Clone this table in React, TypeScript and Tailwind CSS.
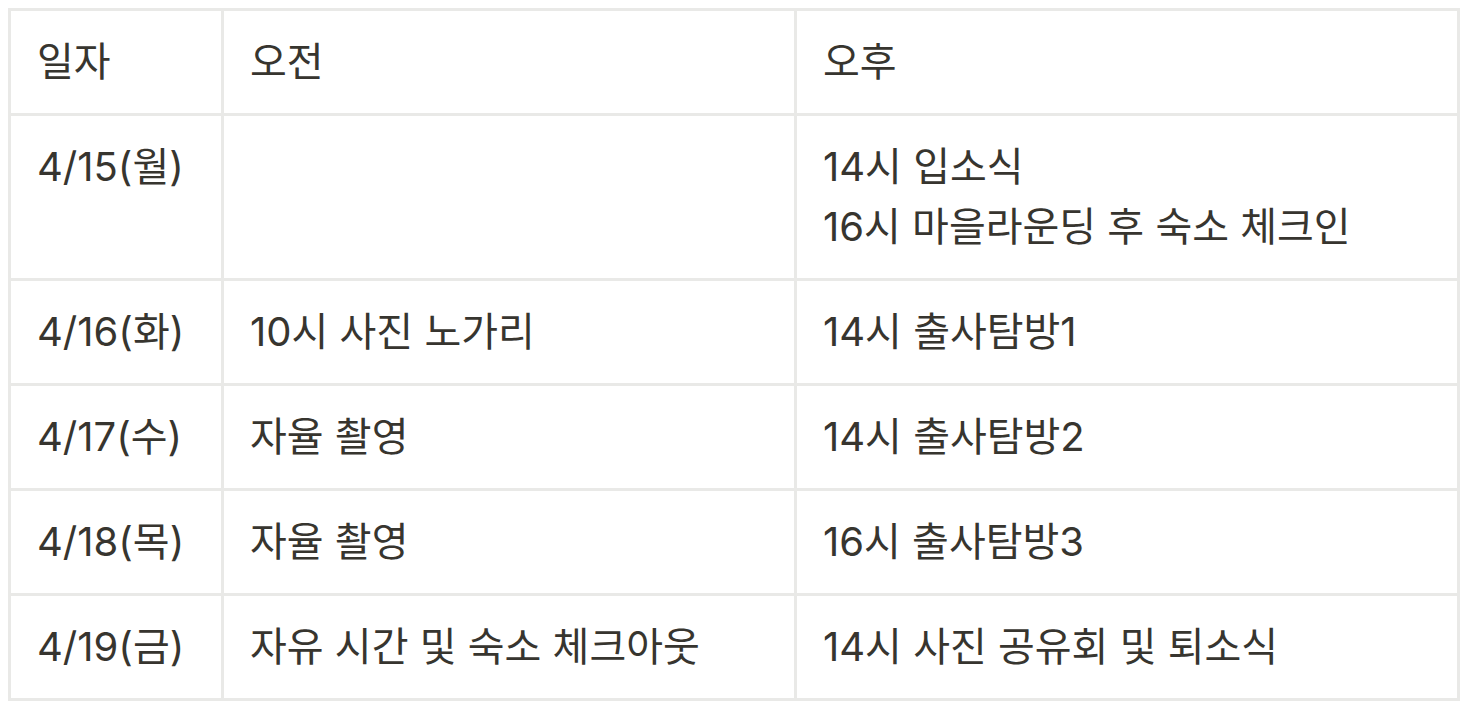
const rows: { date: string; am: string[]; pm: string[] }[] = [
  { date: "4/15(월)", am: [], pm: ["14시 입소식", "16시 마을라운딩 후 숙소 체크인"] },
  { date: "4/16(화)", am: ["10시 사진 노가리"], pm: ["14시 출사탐방1"] },
  { date: "4/17(수)", am: ["자율 촬영"], pm: ["14시 출사탐방2"] },
  { date: "4/18(목)", am: ["자율 촬영"], pm: ["16시 출사탐방3"] },
  { date: "4/19(금)", am: ["자유 시간 및 숙소 체크아웃"], pm: ["14시 사진 공유회 및 퇴소식"] },
];

function Cell({ lines }: { lines: string[] }) {
  return (
    <div className="min-h-[105px] border-r-[3px] border-b-[3px] border-[#e9e9e7] px-[26px] py-[21px]">
      {lines.map((line) => (
        <div key={line} className="whitespace-nowrap">
          {line}
        </div>
      ))}
    </div>
  );
}

export default function App() {
  return (
    <div className="min-h-screen bg-white pt-[8px] pl-[8px]">
      <div
        className="grid w-[1452px] grid-cols-[213px_573px_663px] border-t-[3px] border-l-[3px] border-[#e9e9e7] text-[40px] leading-[60px] text-[#37352f]"
        style={{ fontFamily: 'Inter, "Noto Sans CJK KR", sans-serif' }}
      >
        <Cell lines={["일자"]} />
        <Cell lines={["오전"]} />
        <Cell lines={["오후"]} />
        {rows.map((row) => (
          <div key={row.date} className="contents">
            <Cell lines={[row.date]} />
            <Cell lines={row.am} />
            <Cell lines={row.pm} />
          </div>
        ))}
      </div>
    </div>
  );
}
